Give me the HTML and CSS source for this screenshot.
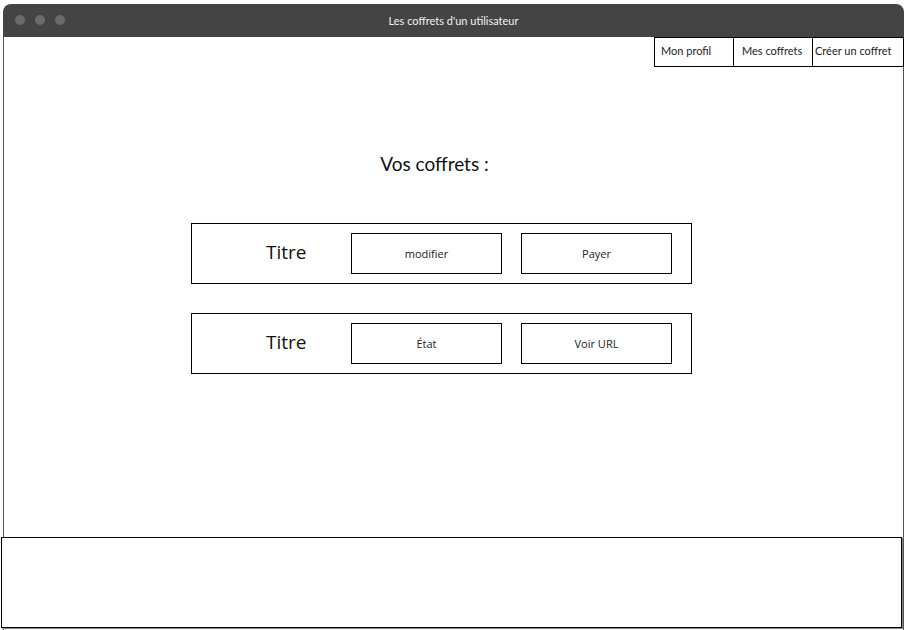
FILE: index.html
```html
<!DOCTYPE html>
<html lang="fr">
<head>
<meta charset="utf-8">
<title>Les coffrets d'un utilisateur</title>
<link rel="stylesheet" href="styles.css">
</head>
<body>
<div class="window">
  <div class="titlebar">
    <div class="dots"><span class="dot"></span><span class="dot"></span><span class="dot"></span></div>
    <div class="title">Les coffrets d'un utilisateur</div>
    <div></div>
  </div>
  <div class="content">
    <nav class="nav">
      <a class="nav-item nav-profil">Mon profil</a>
      <a class="nav-item nav-mes">Mes coffrets</a>
      <a class="nav-item nav-creer">Créer un coffret</a>
    </nav>
    <section class="board">
      <h1 class="heading">Vos coffrets :</h1>
      <div class="card">
        <div class="card-title">Titre</div>
        <div class="btn">modifier</div>
        <div class="btn">Payer</div>
      </div>
      <div class="card">
        <div class="card-title">Titre</div>
        <div class="btn">État</div>
        <div class="btn">Voir URL</div>
      </div>
    </section>
    <footer class="footer"></footer>
  </div>
</div>
</body>
</html>
```
FILE: styles.css
```css
html, body {
  margin: 0;
  padding: 0;
  background: #fff;
}
body {
  padding: 4px 0 0 3px;
  font-family: "Lato", "Liberation Sans", sans-serif;
  color: #111;
}
.window {
  width: 901px;
  height: 626px;
  display: flex;
  flex-direction: column;
  box-sizing: border-box;
}
.titlebar {
  height: 33px;
  flex: none;
  background: #444;
  border-radius: 8px 8px 0 0;
  display: grid;
  grid-template-columns: 1fr auto 1fr;
  align-items: center;
}
.dots {
  display: flex;
  gap: 10px;
  padding-left: 12px;
  margin-top: -2px;
}
.dot {
  width: 10px;
  height: 10px;
  border-radius: 50%;
  background: #6b6b6b;
}
.title {
  color: #f2f2f2;
  font-size: 11px;
  margin-top: -1px;
}
.content {
  flex: 1;
  display: flex;
  flex-direction: column;
  border-left: 1px solid #555;
  border-right: 1px solid #555;
}
.nav {
  align-self: flex-end;
  margin-right: -1px;
  display: flex;
  height: 30px;
  box-sizing: border-box;
  border: 1px solid #000;
  font-size: 11px;
}
.nav-item {
  display: flex;
  align-items: center;
  box-sizing: border-box;
  color: #222;
  padding-bottom: 4px;
}
.nav-item + .nav-item {
  border-left: 1px solid #000;
}
.nav-profil { width: 78px; padding-left: 6px; }
.nav-mes { width: 79px; padding-left: 8px; }
.nav-creer { width: 91px; padding-left: 2px; }
.board {
  margin-left: 187px;
  width: 501px;
  display: flex;
  flex-direction: column;
  gap: 29px;
}
.heading {
  margin: 85px 0 19px 0;
  font-size: 19px;
  line-height: 23px;
  font-weight: 400;
  text-align: center;
  padding-right: 14px;
}
.card {
  height: 61px;
  box-sizing: border-box;
  border: 1px solid #000;
  display: flex;
  align-items: center;
  padding-left: 74px;
  gap: 19px;
}
.card-title {
  width: 66px;
  font-family: "Open Sans", "Noto Sans", sans-serif;
  font-size: 19px;
  margin-top: -3px;
}
.btn {
  width: 151px;
  height: 41px;
  box-sizing: border-box;
  border: 1px solid #000;
  display: flex;
  align-items: center;
  justify-content: center;
  font-family: "Open Sans", "Noto Sans", sans-serif;
  font-size: 11px;
  color: #222;
}
.footer {
  margin-top: auto;
  margin-bottom: 2px;
  margin-left: -3px;
  width: 901px;
  height: 91px;
  box-sizing: border-box;
  border: 1px solid #000;
  background: #fff;
  box-shadow: 1px 1px 0 #888;
}
```
